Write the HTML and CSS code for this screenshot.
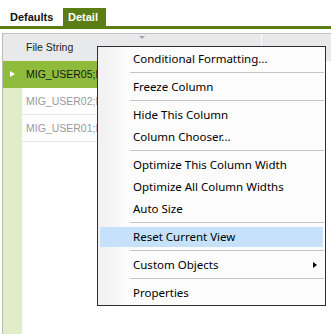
FILE: index.html
```html
<!DOCTYPE html>
<html>
<head>
<meta charset="utf-8">
<link rel="stylesheet" href="styles.css">
</head>
<body>
<div class="tabs">
  <div class="tab">Defaults</div>
  <div class="tab active">Detail</div>
</div>
<div class="grid">
  <div class="head">
    <div class="ind"></div>
    <div class="hcell">File String<span class="sort"></span></div>
    <div class="hrest"></div>
  </div>
  <div class="row sel">
    <div class="ind"><span class="cur"></span></div>
    <div class="cell">MIG_USER05;MIG_USER05</div>
  </div>
  <div class="row">
    <div class="ind"></div>
    <div class="cell">MIG_USER02;MIG_USER02</div>
  </div>
  <div class="row">
    <div class="ind"></div>
    <div class="cell">MIG_USER01;MIG_USER01</div>
  </div>
  <div class="row filler">
    <div class="ind"></div>
  </div>
</div>
<div class="menu">
  <div class="item">Conditional Formatting...</div>
  <div class="sep"></div>
  <div class="item">Freeze Column</div>
  <div class="sep"></div>
  <div class="item">Hide This Column</div>
  <div class="item">Column Chooser...</div>
  <div class="sep"></div>
  <div class="item">Optimize This Column Width</div>
  <div class="item">Optimize All Column Widths</div>
  <div class="item">Auto Size</div>
  <div class="sep"></div>
  <div class="item hover">Reset Current View</div>
  <div class="sep"></div>
  <div class="item sub">Custom Objects<span class="arrow"></span></div>
  <div class="sep"></div>
  <div class="item">Properties</div>
</div>
</body>
</html>
```
FILE: styles.css
```css
html, body {
  margin: 0;
  height: 100%;
  background: #fff;
  overflow: hidden;
}
body {
  display: flex;
  flex-direction: column;
  font-family: "Liberation Sans", Arial, sans-serif;
}
.tabs {
  display: flex;
  margin-top: 8px;
  padding-left: 2px;
  height: 18px;
  border-bottom: 3px solid #5b7e14;
}
.tab {
  font-weight: bold;
  font-size: 11px;
  line-height: 18px;
  color: #111;
  padding: 0 8px;
  width: 44px;
  text-align: left;
}
.tab.active {
  background: #5b7e14;
  color: #fff;
  padding: 0 7px 0 5px;
  margin-left: 1px;
  width: 31px;
}
.grid {
  margin-top: 4px;
  margin-left: 2px;
  border-left: 1px solid #b9b9b9;
  border-top: 1px solid #c4c4c4;
  flex: 1;
  display: flex;
  flex-direction: column;
}
.head {
  display: flex;
  height: 27px;
  background: #e8e9eb;
}
.ind {
  width: 19px;
  flex: none;
  background: #e1ecc8;
  position: relative;
}
.head .ind {
  background: #e8e9eb;
}
.hcell {
  width: 240px;
  border-right: 1px solid #fafafa;
  font-size: 10.5px;
  line-height: 27px;
  padding-left: 4px;
  box-sizing: border-box;
  color: #1d1d1d;
  position: relative;
}
.sort {
  position: absolute;
  left: 117px;
  top: 2px;
  width: 0;
  height: 0;
  border-left: 3px solid transparent;
  border-right: 3px solid transparent;
  border-top: 3px solid #a3a5ad;
}
.hrest {
  flex: 1;
}
.row {
  display: flex;
  height: 27px;
}
.cell {
  width: 240px;
  box-sizing: border-box;
  border-bottom: 1px solid #e6e6e6;
  font-size: 10.5px;
  line-height: 26px;
  padding-left: 4px;
  color: #9a9a9a;
  white-space: nowrap;
  overflow: hidden;
}
.row.sel .ind, .row.sel .cell {
  background: #8ebb3c;
}
.row.sel .cell {
  color: #161616;
  border-bottom-color: #8ebb3c;
}
.cur {
  position: absolute;
  left: 7px;
  top: 10px;
  width: 0;
  height: 0;
  border-top: 3px solid transparent;
  border-bottom: 3px solid transparent;
  border-left: 5px solid #fff;
}
.row.filler {
  flex: 1;
}
.menu {
  position: absolute;
  left: 97px;
  top: 46px;
  width: 227px;
  height: 257px;
  border: 1px solid #2e2e2e;
  background: linear-gradient(to right, #f1f1f1 0, #f6f6f6 18px, #fcfcfc 25px, #fcfcfc 100%);
  padding-top: 1px;
  box-sizing: content-box;
  font-family: "Noto Sans", "Segoe UI", sans-serif;
  font-size: 11.5px;
  color: #000;
}
.item {
  height: 22px;
  line-height: 22px;
  padding-left: 33px;
  margin: 0 2px 0 2px;
  position: relative;
  white-space: nowrap;
}
.item.hover {
  background: #c5e1fb;
  height: 20px;
  line-height: 20px;
  margin: 1px 2px 1px 2px;
}
.sep {
  height: 6px;
  margin: 0 1px 0 32px;
  position: relative;
}
.sep::after {
  content: "";
  position: absolute;
  left: 0;
  right: 0;
  top: 2px;
  height: 1px;
  background: #c4c4c4;
}
.arrow {
  position: absolute;
  left: 213px;
  top: 8px;
  width: 0;
  height: 0;
  border-top: 3.5px solid transparent;
  border-bottom: 3.5px solid transparent;
  border-left: 4px solid #000;
}
```
